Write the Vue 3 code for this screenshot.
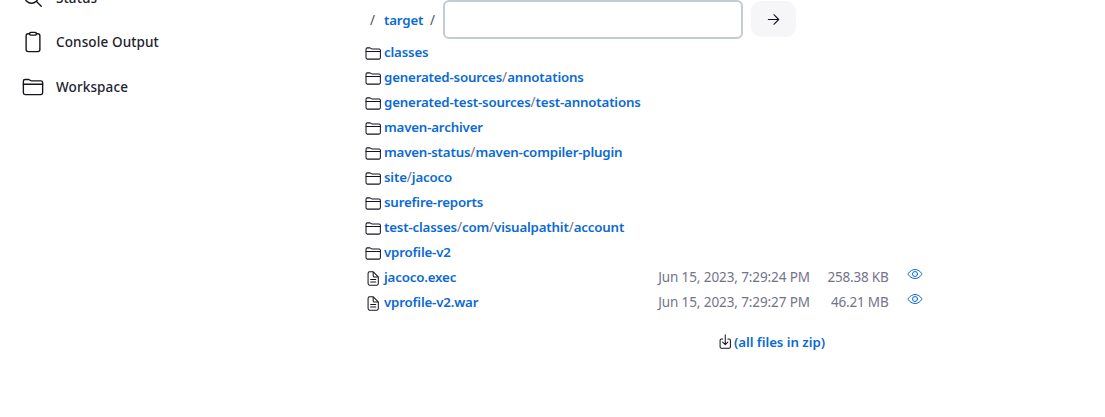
<script setup>
const icons = {
  search: ['M221.09 64a157.09 157.09 0 10157.09 157.09A157.1 157.1 0 00221.09 64z', 'M338.29 338.29L448 448'],
  clipboard: [
    'M336 64h32a48 48 0 0148 48v320a48 48 0 01-48 48H144a48 48 0 01-48-48V112a48 48 0 0148-48h32',
    'M202.13 32h107.74a26.13 26.13 0 0126.13 26.13v11.74A26.13 26.13 0 01309.87 96H202.13A26.13 26.13 0 01176 69.87V58.13A26.13 26.13 0 01202.13 32z',
  ],
  folder: [
    'M440 432H72a40 40 0 01-40-40V120a40 40 0 0140-40h75.89a40 40 0 0122.19 6.72l27.84 18.56a40 40 0 0022.19 6.72H440a40 40 0 0140 40v240a40 40 0 01-40 40z',
    'M32 192h448',
  ],
  file: [
    'M416 221.25V416a48 48 0 01-48 48H144a48 48 0 01-48-48V96a48 48 0 0148-48h98.75a32 32 0 0122.62 9.37l141.26 141.26a32 32 0 019.37 22.62z',
    'M256 56v120a32 32 0 0032 32h120M176 288h160M176 368h160',
  ],
  eye: [
    'M255.66 112c-77.94 0-157.89 45.11-220.83 135.33a16 16 0 00-.27 17.77C82.92 340.8 161.8 400 255.66 400c92.84 0 173.34-59.38 221.79-135.25a16.14 16.14 0 000-17.47C428.89 172.28 347.8 112 255.66 112z',
    'M336 256a80 80 0 11-160 0 80 80 0 01160 0z',
  ],
  download: ['M336 176h40a40 40 0 0140 40v208a40 40 0 01-40 40H136a40 40 0 01-40-40V216a40 40 0 0140-40h40', 'M176 272l80 80 80-80M256 48v288'],
  arrow: ['M268 112l144 144-144 144M392 256H100'],
}

const tasks = [
  { icon: 'search', label: 'Status' },
  { icon: 'clipboard', label: 'Console Output' },
  { icon: 'folder', label: 'Workspace' },
]

const entries = [
  { parts: ['classes'] },
  { parts: ['generated-sources', 'annotations'] },
  { parts: ['generated-test-sources', 'test-annotations'] },
  { parts: ['maven-archiver'] },
  { parts: ['maven-status', 'maven-compiler-plugin'] },
  { parts: ['site', 'jacoco'] },
  { parts: ['surefire-reports'] },
  { parts: ['test-classes', 'com', 'visualpathit', 'account'] },
  { parts: ['vprofile-v2'] },
  { parts: ['jacoco.exec'], date: 'Jun 15, 2023, 7:29:24 PM', size: '258.38 KB' },
  { parts: ['vprofile-v2.war'], date: 'Jun 15, 2023, 7:29:27 PM', size: '46.21 MB' },
]
</script>

<template>
  <div class="page">
    <nav class="side">
      <a v-for="t in tasks" :key="t.label" class="task">
        <svg class="icon" viewBox="0 0 512 512"><path v-for="d in icons[t.icon]" :key="d" :d="d" /></svg>
        <span>{{ t.label }}</span>
      </a>
    </nav>
    <main class="main">
      <form class="crumbs" @submit.prevent>
        <span class="sep">/</span>
        <a class="link target">target</a>
        <span class="sep second">/</span>
        <input class="path" type="text" aria-label="Path" />
        <button class="go" type="submit" aria-label="Go">
          <svg class="icon" viewBox="0 0 512 512"><path :d="icons.arrow[0]" /></svg>
        </button>
      </form>
      <div class="files">
        <div v-for="e in entries" :key="e.parts.join('/')" class="row">
          <svg class="icon kind" viewBox="0 0 512 512">
            <path v-for="d in icons[e.date ? 'file' : 'folder']" :key="d" :d="d" />
          </svg>
          <div class="name">
            <template v-for="(p, i) in e.parts" :key="i"><span v-if="i" class="slash">/</span><a class="link">{{ p }}</a></template>
          </div>
          <template v-if="e.date">
            <span class="date">{{ e.date }}</span>
            <span class="size">{{ e.size }}</span>
            <a class="view"><svg class="icon" viewBox="0 0 512 512"><path v-for="d in icons.eye" :key="d" :d="d" /></svg></a>
          </template>
        </div>
      </div>
      <div class="zip">
        <svg class="icon" viewBox="0 0 512 512"><path v-for="d in icons.download" :key="d" :d="d" /></svg>
        <a class="link">(all files in zip)</a>
      </div>
    </main>
  </div>
</template>

<style>
body {
  background: #fff;
  overflow: hidden;
}
</style>

<style scoped>
.page {
  display: flex;
  width: 1105px;
  height: 417px;
  overflow: hidden;
  font-family: "Noto Sans", sans-serif;
  font-size: 13.5px;
  color: #14141f;
}
.icon {
  display: block;
  flex: none;
  fill: none;
  stroke: currentColor;
  stroke-width: 32;
  stroke-linecap: round;
  stroke-linejoin: round;
}
.side {
  width: 365px;
  flex: none;
  margin-top: -23px;
}
.task {
  display: flex;
  align-items: center;
  height: 45px;
  padding-left: 22px;
  gap: 12px;
  font-weight: 500;
  letter-spacing: 0.12px;
  white-space: nowrap;
  color: #22222e;
}
.task:first-child {
  height: 42px;
}
.task .icon {
  width: 22px;
  height: 22px;
  color: #14141f;
}
.main {
  width: 560px;
}
.link {
  color: #0b6ad4;
  font-size: 13.3px;
  font-weight: 600;
  letter-spacing: -0.18px;
}
.crumbs {
  display: flex;
  align-items: center;
  height: 39px;
  padding-left: 5px;
}
.sep {
  width: 14px;
  padding-top: 1px;
  color: #4d545d;
}
.target {
  width: 46px;
  padding-top: 1px;
}
.second {
  width: 13px;
}
.path {
  box-sizing: border-box;
  width: 300px;
  height: 39px;
  margin: 0;
  border: 2px solid #c3ccd1;
  border-radius: 6px;
  background: #fff;
  outline: none;
}
.go {
  display: flex;
  align-items: center;
  justify-content: center;
  width: 45px;
  height: 36px;
  margin: 0 0 1px 8px;
  padding: 0;
  border: 0;
  border-radius: 10px;
  background: #f6f6f9;
  color: #14141f;
}
.go .icon {
  width: 17px;
  height: 17px;
}
.row {
  display: flex;
  align-items: center;
  height: 25px;
  white-space: nowrap;
}
.kind {
  width: 16.4px;
  height: 17px;
  margin: 4px 2.6px 0 0;
}
.name {
  width: 264px;
}
.slash {
  color: #73738c;
}
.date {
  width: 162px;
  text-align: right;
  letter-spacing: -0.1px;
  color: #73738c;
}
.size {
  width: 78.5px;
  text-align: right;
  letter-spacing: -0.2px;
  color: #73738c;
}
.view {
  margin: 0 0 6px 18.5px;
  color: #0b6ad4;
}
.view .icon {
  width: 16px;
  height: 16px;
}
.zip {
  display: flex;
  align-items: center;
  height: 24px;
  margin: 16px 0 0 351.5px;
}
.zip .link {
  letter-spacing: -0.05px;
}
.zip .icon {
  width: 16.5px;
  height: 17px;
  margin: 0 1px 1px 0;
}
</style>
